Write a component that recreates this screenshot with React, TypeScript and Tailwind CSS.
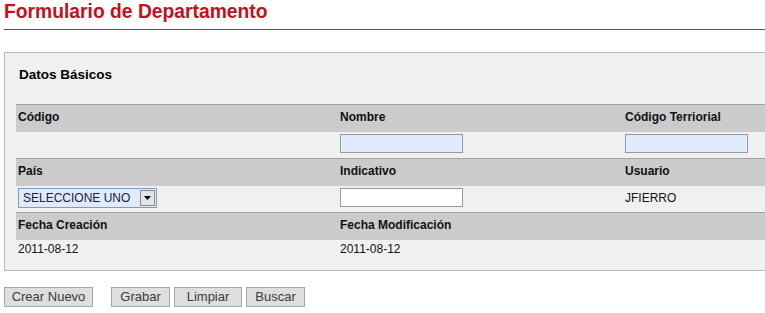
export default function App() {
  const label = "font-bold text-[12px] text-[#111]";
  const headRow = "flex h-[28px] border-t border-[#a3a3a3] bg-[#cbcbcb] pt-[3px]";
  const field = "h-[19px] w-[123px] border border-[#999] bg-[#dfeafc]";
  const btn =
    "h-[20px] border border-[#a6a6a6] bg-[#dedede] text-[13px] leading-[18px] text-[#3a3a3a]";

  return (
    <div className="h-[313px] w-[765px] overflow-hidden bg-white font-['Liberation_Sans',Arial,sans-serif]">
      <h1 className="pl-[4px] pt-[1px] text-[19.3px] font-bold leading-[22px] text-[#c4101a]">
        Formulario de Departamento
      </h1>
      <div className="ml-[4px] mt-[6px] h-[1px] w-[800px] bg-[#555]" />

      <div className="ml-[4px] mt-[22px] w-[820px] border border-[#bababa] bg-[#f0f0f0] pb-[1px] pl-[11px]">
        <h2 className="pl-[3px] pt-[14px] text-[13.5px] font-bold leading-[16px] text-black">Datos Básicos</h2>

        <div className="mt-[21px]">
          <div className={headRow}>
            <div className={`w-[322px] pl-[2px] ${label}`}>Código</div>
            <div className={`w-[285px] pl-[2px] ${label}`}>Nombre</div>
            <div className={`pl-[2px] ${label}`}>Código Terriorial</div>
          </div>
          <div className="flex h-[26px] pt-[2px]">
            <div className="w-[322px]" />
            <div className="w-[285px] pl-[2px]">
              <div className={field} />
            </div>
            <div className="pl-[2px]">
              <div className={field} />
            </div>
          </div>

          <div className={headRow}>
            <div className={`w-[322px] pl-[2px] ${label}`}>País</div>
            <div className={`w-[285px] pl-[2px] ${label}`}>Indicativo</div>
            <div className={`pl-[2px] ${label}`}>Usuario</div>
          </div>
          <div className="flex h-[26px] items-start pt-[2px]">
            <div className="w-[322px] pl-[2px]">
              <div className="flex h-[20px] w-[139px] items-center border border-[#7f9db9] bg-[#dfeafc] pl-[4px] text-[12px] text-[#1a1a40]">
                <span className="flex-1">SELECCIONE UNO</span>
                <span className="mr-[1px] flex h-[16px] w-[15px] items-center justify-center border border-[#8a8a8a] bg-[#e4e4e4]">
                  <svg width="7" height="4" viewBox="0 0 7 4">
                    <path d="M0 0H7L3.5 4Z" fill="#000" />
                  </svg>
                </span>
              </div>
            </div>
            <div className="w-[285px] pl-[2px]">
              <div className="h-[19px] w-[123px] border border-[#999] bg-white" />
            </div>
            <div className="pl-[2px] pt-[3px] text-[12px] leading-[14px] text-[#111]">JFIERRO</div>
          </div>

          <div className={headRow}>
            <div className={`w-[322px] pl-[2px] ${label}`}>Fecha Creación</div>
            <div className={`w-[285px] pl-[2px] ${label}`}>Fecha Modificación</div>
            <div />
          </div>
          <div className="flex h-[29px] pt-[2px] text-[12px] leading-[14px] text-[#111]">
            <div className="w-[322px] pl-[2px]">2011-08-12</div>
            <div className="w-[285px] pl-[2px]">2011-08-12</div>
          </div>
        </div>
      </div>

      <div className="ml-[4px] mt-[16px] flex gap-[4px]">
        <button className={`${btn} mr-[14px] w-[89px]`}>Crear Nuevo</button>
        <button className={`${btn} w-[59px]`}>Grabar</button>
        <button className={`${btn} w-[68px]`}>Limpiar</button>
        <button className={`${btn} w-[59px]`}>Buscar</button>
      </div>
    </div>
  );
}
